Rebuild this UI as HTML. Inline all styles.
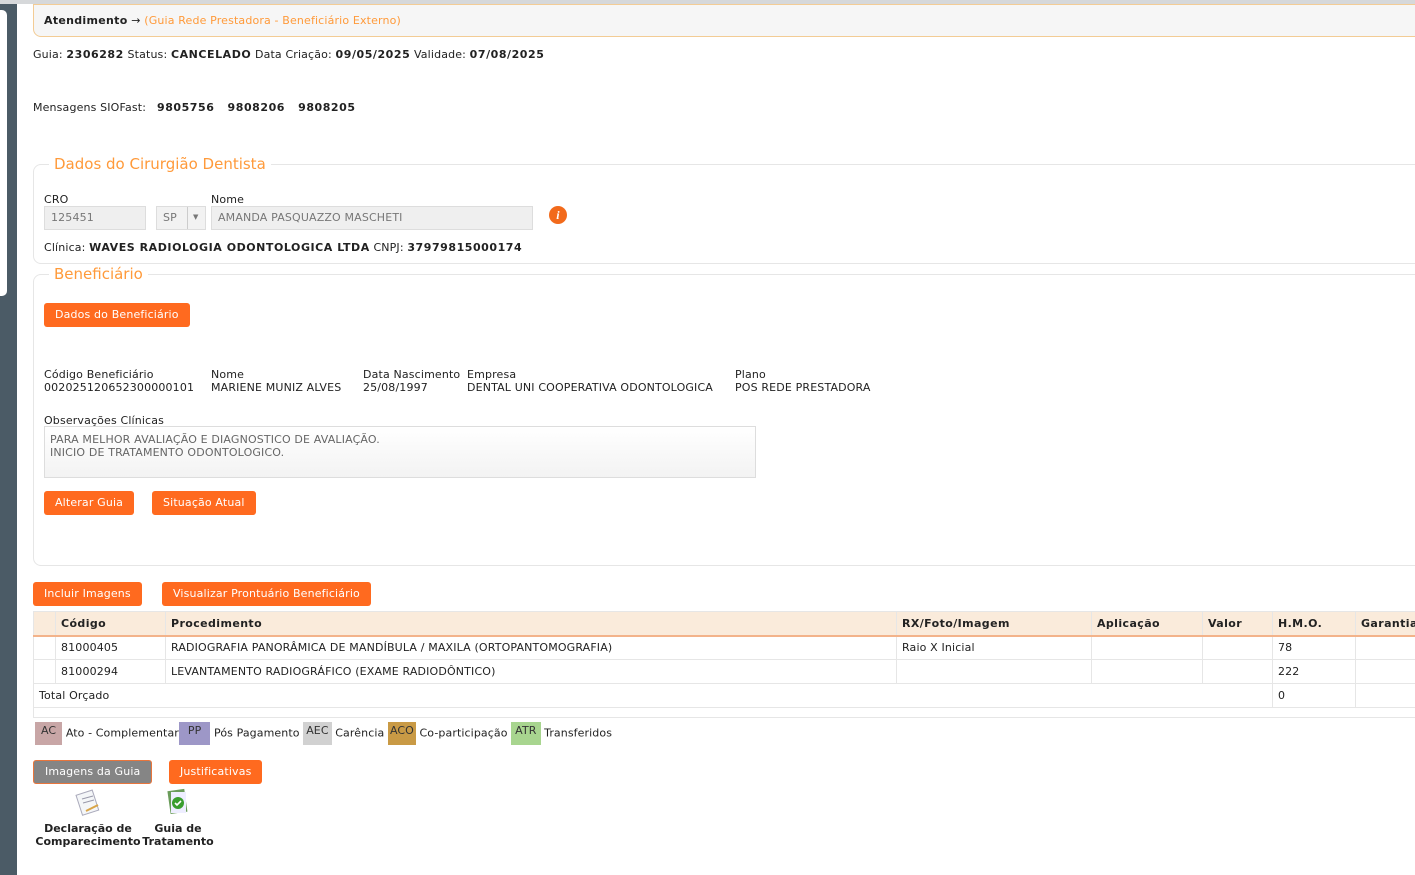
<!DOCTYPE html>
<html><head><meta charset="utf-8"><style>
*{margin:0;padding:0;box-sizing:border-box}
body{width:1415px;height:875px;overflow:hidden;background:#fff;font-family:"DejaVu Sans","Liberation Sans",sans-serif;font-size:11px;color:#222;position:relative;letter-spacing:0.15px}
.a{position:absolute;white-space:nowrap}
b{font-weight:bold;letter-spacing:0.55px}
.btn{position:absolute;background:#ff6a1f;color:#fff;border-radius:3px;height:24px;line-height:24px;padding:0 11px;font-size:11px}
.inp{position:absolute;background:#efefef;border:1px solid #ddd;height:24px;line-height:22px;padding-left:6px;color:#777}
.fs{position:absolute;border:1px solid #e6e6e6;border-radius:8px}
.leg{font-size:15px;color:#ff9a3a;background:#fff;padding:0 5px;letter-spacing:0}
table{position:absolute;left:33px;top:611px;border-collapse:collapse;width:1400px}
td,th{height:24px;border:1px solid #e6e6e6;text-align:left;padding-left:5px;font-size:11px}
th{background:#faebdb;border-bottom:2px solid #f3b38a;font-weight:bold;letter-spacing:0.4px}
.sw{display:inline-block;height:23px;line-height:18px;padding:0 6px;vertical-align:middle;color:#333}
</style></head><body>
<div class="a" style="left:0;top:0;width:1415px;height:4px;background:#d6d8da"></div>
<div class="a" style="left:0;top:4px;width:17px;height:871px;background:#4b5b66"></div>
<div class="a" style="left:0;top:10px;width:7px;height:286px;background:#fff;border-radius:0 5px 5px 0"></div>
<div class="a" style="left:33px;top:4px;width:1390px;height:33px;background:#f6f6f6;border:1px solid #f3cc95;border-radius:0 0 0 8px"></div>
<div class="a" style="left:44px;top:14px"><b style="letter-spacing:0.3px">Atendimento</b> → <span style="color:#ff9a3a">(Guia Rede Prestadora - Beneficiário Externo)</span></div>
<div class="a" style="left:33px;top:48px">Guia: <b>2306282</b> Status: <b>CANCELADO</b> Data Criação: <b>09/05/2025</b> Validade: <b>07/08/2025</b></div>
<div class="a" style="left:33px;top:101px">Mensagens SIOFast: &nbsp; <b>9805756 &nbsp; 9808206 &nbsp; 9808205</b></div>

<div class="fs" style="left:33px;top:164px;width:1400px;height:100px"></div>
<div class="a leg" style="left:49px;top:155px">Dados do Cirurgião Dentista</div>
<div class="a" style="left:44px;top:193px">CRO</div>
<div class="a" style="left:211px;top:193px">Nome</div>
<div class="inp" style="left:44px;top:206px;width:102px">125451</div>
<div class="inp" style="left:156px;top:206px;width:50px;background:#f2f2f2">SP</div>
<div class="a" style="left:187px;top:207px;width:1px;height:22px;background:#ccc"></div>
<div class="a" style="left:193px;top:213px;font-size:7px;color:#777">▼</div>
<div class="inp" style="left:211px;top:206px;width:322px">AMANDA PASQUAZZO MASCHETI</div>
<div class="a" style="left:549px;top:206px;width:18px;height:18px;border-radius:50%;background:#f26a1b;color:#fff;font:bold italic 12px 'Liberation Serif',serif;text-align:center;line-height:18px">i</div>
<div class="a" style="left:44px;top:241px">Clínica: <b>WAVES RADIOLOGIA ODONTOLOGICA LTDA</b> CNPJ: <b>37979815000174</b></div>

<div class="fs" style="left:33px;top:274px;width:1400px;height:292px"></div>
<div class="a leg" style="left:49px;top:265px">Beneficiário</div>
<div class="btn" style="left:44px;top:303px">Dados do Beneficiário</div>
<div class="a" style="left:44px;top:368px;line-height:13px">Código Beneficiário<br>002025120652300000101</div>
<div class="a" style="left:211px;top:368px;line-height:13px">Nome<br>MARIENE MUNIZ ALVES</div>
<div class="a" style="left:363px;top:368px;line-height:13px">Data Nascimento<br>25/08/1997</div>
<div class="a" style="left:467px;top:368px;line-height:13px">Empresa<br>DENTAL UNI COOPERATIVA ODONTOLOGICA</div>
<div class="a" style="left:735px;top:368px;line-height:13px">Plano<br>POS REDE PRESTADORA</div>
<div class="a" style="left:44px;top:414px">Observações Clínicas</div>
<div class="a" style="left:44px;top:426px;width:712px;height:52px;border:1px solid #ddd;background:linear-gradient(#fff,#f3f3f3);padding:6px 5px;color:#666;line-height:13px">PARA MELHOR AVALIAÇÃO E DIAGNOSTICO DE AVALIAÇÃO.<br>INICIO DE TRATAMENTO ODONTOLOGICO.</div>
<div class="btn" style="left:44px;top:491px">Alterar Guia</div>
<div class="btn" style="left:152px;top:491px">Situação Atual</div>

<div class="btn" style="left:33px;top:582px">Incluir Imagens</div>
<div class="btn" style="left:162px;top:582px">Visualizar Prontuário Beneficiário</div>

<table>
<tr><th style="width:22px"></th><th style="width:110px">Código</th><th style="width:731px">Procedimento</th><th style="width:195px">RX/Foto/Imagem</th><th style="width:111px">Aplicação</th><th style="width:70px">Valor</th><th style="width:83px">H.M.O.</th><th>Garantia</th></tr>
<tr><td></td><td>81000405</td><td>RADIOGRAFIA PANORÂMICA DE MANDÍBULA / MAXILA (ORTOPANTOMOGRAFIA)</td><td>Raio X Inicial</td><td></td><td></td><td>78</td><td></td></tr>
<tr><td></td><td>81000294</td><td>LEVANTAMENTO RADIOGRÁFICO (EXAME RADIODÔNTICO)</td><td></td><td></td><td></td><td>222</td><td></td></tr>
<tr><td colspan="6">Total Orçado</td><td>0</td><td></td></tr>
<tr><td colspan="8" style="height:10px"></td></tr>
</table>

<div class="a" style="left:35px;top:722px;letter-spacing:0.1px"><span class="sw" style="background:#c8a6a6">AC</span> Ato - Complementar<span class="sw" style="background:#9d97c7;padding:0 9px">PP</span> Pós Pagamento <span class="sw" style="background:#d1d1d1;padding:0 3px">AEC</span> Carência <span class="sw" style="background:#c99a45;padding:0 2px">ACO</span> Co-participação <span class="sw" style="background:#a8d58f;padding:0 4px">ATR</span> Transferidos</div>

<div class="btn" style="left:33px;top:760px;background:#858585;border:1px solid #e8753c;line-height:22px">Imagens da Guia</div>
<div class="btn" style="left:169px;top:760px">Justificativas</div>

<svg class="a" style="left:74px;top:789px" width="28" height="28"><rect x="5" y="3" width="17" height="21" fill="#f4f6f8" stroke="#aab" transform="rotate(-18 14 14)"/><line x1="8" y1="10" x2="19" y2="7" stroke="#99a"/><line x1="9" y1="14" x2="20" y2="11" stroke="#99a"/><line x1="12" y1="22" x2="24" y2="16" stroke="#d9a548" stroke-width="2"/></svg>
<svg class="a" style="left:165px;top:788px" width="26" height="30"><rect x="4" y="2" width="17" height="23" fill="#6a9c5a" transform="rotate(-8 12 14)"/><rect x="6" y="4" width="15" height="21" fill="#eef"/><circle cx="13" cy="15" r="6" fill="#3a9e2e"/><path d="M10 15l2 2 4-4" stroke="#fff" stroke-width="1.6" fill="none"/></svg>
<div class="a" style="left:35px;top:822px;width:106px;text-align:center;font-weight:bold;line-height:13px;letter-spacing:0">Declaração de<br>Comparecimento</div>
<div class="a" style="left:141px;top:822px;width:74px;text-align:center;font-weight:bold;line-height:13px;letter-spacing:0">Guia de<br>Tratamento</div>
</body></html>
